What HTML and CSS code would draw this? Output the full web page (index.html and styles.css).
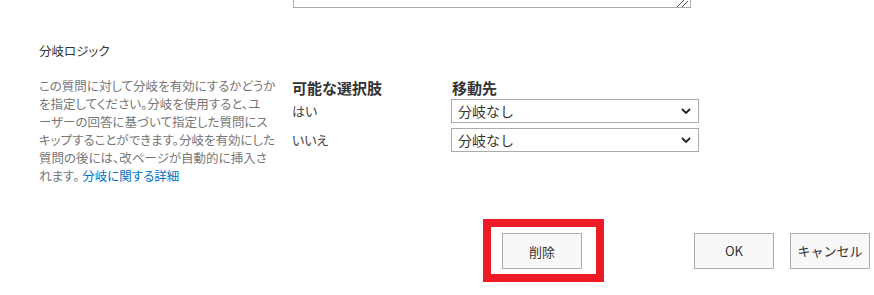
FILE: index.html
```html
<!DOCTYPE html>
<html lang="ja">
    <head>
        <meta charset="utf-8"/>
        <title>分岐ロジック</title>
        <link rel="stylesheet" href="styles.css">
    </head>
    <body>
        <!-- bottom of the question textarea -->
        <div class="textareaStub">
            <svg class="grip" width="12" height="7" viewBox="0 0 12 7">
                <line x1="1" y1="7" x2="8" y2="0" stroke="#555" stroke-width="1"/>
                <line x1="6" y1="7" x2="12" y2="1" stroke="#555" stroke-width="1"/>
            </svg>
        </div>

        <h2 class="sectionTitle">分岐ロジック</h2>

        <div class="branching">
            <p class="intro">
                この質問に対して分岐を有効にするかどうか<br>
                を指定してください。分岐を使用すると、ユ<br>
                ーザーの回答に基づいて指定した質問にス<br>
                キップすることができます。分岐を有効にした<br>
                質問の後には、改ページが自動的に挿入さ<br>
                れます。 <a href="#" class="more">分岐に関する詳細</a>
            </p>

            <div class="choices">
                <div class="colHead">可能な選択肢</div>
                <div class="colHead">移動先</div>

                <div class="choice">はい</div>
                <div class="dropdown">
                    <span>分岐なし</span>
                    <svg width="10" height="6" viewBox="0 0 10 6"><polyline points="1,1 5,5 9,1" fill="none" stroke="#222" stroke-width="1.8"/></svg>
                </div>

                <div class="choice">いいえ</div>
                <div class="dropdown">
                    <span>分岐なし</span>
                    <svg width="10" height="6" viewBox="0 0 10 6"><polyline points="1,1 5,5 9,1" fill="none" stroke="#222" stroke-width="1.8"/></svg>
                </div>
            </div>
        </div>

        <div class="actions">
            <div class="highlight">
                <button class="btn">削除</button>
            </div>
            <button class="btn">OK</button>
            <button class="btn">キャンセル</button>
        </div>
    </body>
</html>
```

FILE: styles.css
```css
body {
    margin: 0;
    background-color: #fff;
    color: #333;
    font-family: "Noto Sans CJK JP", "Noto Sans", sans-serif;
    overflow: hidden;
}

.textareaStub {
    position: relative;
    margin-left: 293px;
    width: 396px;
    height: 7px;
    border: 1px solid #ababab;
    border-top: none;
}

.grip {
    position: absolute;
    right: 2px;
    top: 0;
}

.sectionTitle {
    margin: 34px 0 0 39px;
    font-size: 12.5px;
    font-weight: normal;
    line-height: 18px;
    font-feature-settings: "palt";
    color: #333;
}

.branching {
    display: flex;
    align-items: flex-start;
    margin-top: 17px;
}

.intro {
    box-sizing: border-box;
    width: 291px;
    margin: 0;
    padding-left: 39px;
    font-size: 12.5px;
    line-height: 18px;
    color: #767676;
    white-space: nowrap;
    font-feature-settings: "palt";
}

.more {
    color: #0072c6;
    text-decoration: none;
}

.choices {
    display: grid;
    grid-template-columns: 160px 248px;
    align-content: start;
    align-items: center;
    row-gap: 5px;
}

.colHead {
    height: 17px;
    padding-left: 1px;
    font-size: 15px;
    font-weight: bold;
    line-height: 22px;
    color: #333;
}

.choice {
    padding-left: 1px;
    font-size: 13px;
    line-height: 18px;
    color: #444;
    font-feature-settings: "palt";
}

.dropdown {
    display: flex;
    align-items: center;
    justify-content: space-between;
    box-sizing: border-box;
    height: 24px;
    padding: 0 7px 0 6px;
    border: 1px solid #ababab;
    font-size: 14px;
    color: #333;
}

.actions {
    display: flex;
    align-items: center;
    justify-content: flex-end;
    gap: 16px;
    margin-top: 34px;
    padding-right: 4px;
}

.highlight {
    padding: 6px 14px 5px 11px;
    border: 8px solid #ed1c24;
    margin-right: 74px;
}

.btn {
    display: block;
    box-sizing: border-box;
    width: 80px;
    height: 36px;
    border: 1px solid #ababab;
    background-color: #f8f8f8;
    color: #333;
    font-family: "Noto Sans CJK JP", "Noto Sans", sans-serif;
    font-size: 13px;
    padding: 0;
}
```
